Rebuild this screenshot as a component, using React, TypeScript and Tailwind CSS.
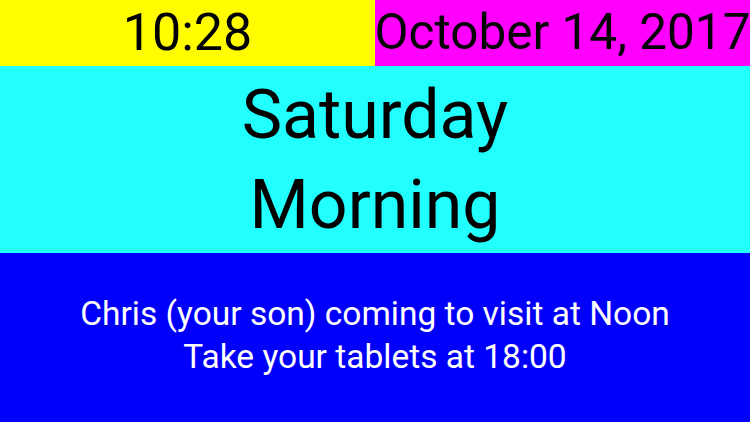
import React from "react";

const App = () => {
  return (
    <div className="w-[750px] h-[422px] flex flex-col overflow-hidden font-['Roboto','Inter',sans-serif] text-black">
      {/* Time + date bar */}
      <div className="h-[66px] flex">
        <div className="w-1/2 bg-[#fffd00] flex items-center justify-center">
          <span className="text-[52px] leading-none">10:28</span>
        </div>
        <div className="w-1/2 bg-[#ff00ff] flex items-center justify-center">
          <span className="text-[49.5px] leading-none whitespace-nowrap">October 14, 2017</span>
        </div>
      </div>

      {/* Day and part of day */}
      <div className="h-[187px] bg-[#21ffff] flex flex-col items-center justify-center">
        <div className="text-[68px] leading-[90px]">Saturday</div>
        <div className="text-[68px] leading-[90px]">Morning</div>
      </div>

      {/* Reminders */}
      <div className="flex-1 bg-[#0000fa] text-white flex flex-col items-center justify-center pb-[6px]">
        <div className="text-[33.5px] leading-[43px]">Chris (your son) coming to visit at Noon</div>
        <div className="text-[33.5px] leading-[43px]">Take your tablets at 18:00</div>
      </div>
    </div>
  );
};

export default App;
